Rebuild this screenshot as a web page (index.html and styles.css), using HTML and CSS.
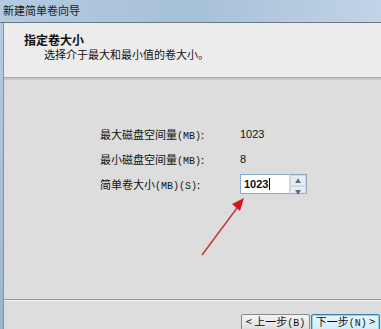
FILE: index.html
```html
<!DOCTYPE html>
<html lang="zh-CN">
<head>
<meta charset="UTF-8">
<title>新建简单卷向导</title>
<link rel="stylesheet" href="styles.css">
</head>
<body>
<div class="titlebar">新建简单卷向导</div>
<div class="frame">
  <div class="panel">
    <div class="header">
      <div class="header-title">指定卷大小</div>
      <div class="header-sub">选择介于最大和最小值的卷大小。</div>
    </div>
    <div class="sep"></div>
    <div class="content">
      <div class="row">
        <span class="label">最大磁盘空间量<span class="latin">(MB)</span>:</span>
        <span class="value">1023</span>
      </div>
      <div class="row">
        <span class="label">最小磁盘空间量<span class="latin">(MB)</span>:</span>
        <span class="value">8</span>
      </div>
      <div class="row">
        <span class="label">简单卷大小<span class="latin">(MB)(S)</span>:</span>
        <div class="spin">
          <div class="spin-text">1023<span class="caret"></span></div>
          <div class="spin-btns">
            <div class="spin-btn">&#9650;</div>
            <div class="spin-btn">&#9660;</div>
          </div>
        </div>
      </div>
      <svg class="arrow" width="60" height="70" viewBox="0 0 60 70">
        <line x1="3" y1="61" x2="38" y2="14" stroke="#c0393b" stroke-width="1.5"/>
        <polygon points="45,4 33,10 41,17" fill="#d8141c"/>
      </svg>
    </div>
    <div class="sep bottom"></div>
    <div class="footer">
      <button class="btn">&lt; 上一步<span class="latin">(B)</span></button>
      <button class="btn focus">下一步<span class="latin">(N)</span> &gt;</button>
    </div>
  </div>
</div>
</body>
</html>
```

FILE: styles.css
```css
body {
  margin: 0;
  width: 381px;
  height: 329px;
  overflow: hidden;
  background-color: #a9c0d6;
  font-family: "Noto Sans CJK SC", "Noto Sans", sans-serif;
  font-size: 11px;
  color: #111;
  display: flex;
  flex-direction: column;
}

.titlebar {
  height: 22px;
  line-height: 21px;
  padding-left: 3px;
  font-size: 11px;
  color: #1a1a1a;
  background: linear-gradient(to right, #b4cbe0, #a6c0d8 50%, #c0d4e6);
  border-bottom: 1px solid #6e7780;
}

.frame {
  flex: 1;
  display: flex;
  padding-left: 3px;
  background: linear-gradient(to bottom, #b6cbe0, #9db5cc);
}

.panel {
  flex: 1;
  display: flex;
  flex-direction: column;
  border-left: 1px solid #8e8e8e;
  background-color: #dddddd;
}

.header {
  height: 54px;
  box-sizing: border-box;
  padding: 9px 0 0 20px;
  background-color: #ececec;
}

.header-title {
  font-weight: bold;
  font-size: 12px;
  line-height: 15px;
}

.header-sub {
  padding-left: 20px;
  line-height: 15px;
}

.sep {
  height: 1px;
  background-color: #a8a8a8;
  border-bottom: 2px solid #c9c9c9;
}

.content {
  position: relative;
  flex: 1;
  padding: 41px 0 0 96px;
}

.row {
  display: flex;
  align-items: center;
  height: 25px;
}

.label {
  width: 140px;
}

.latin {
  font-family: "Liberation Mono", monospace;
  font-size: 10px;
}

.value {
  font-family: "Liberation Sans", sans-serif;
  font-size: 11px;
}

.spin {
  display: flex;
  width: 67px;
  height: 20px;
  box-sizing: border-box;
  border: 1px solid #8fa9c8;
  background-color: #fff;
}

.spin-text {
  flex: 1;
  padding-left: 3px;
  line-height: 18px;
  font-family: "Liberation Sans", sans-serif;
  font-size: 11px;
  font-weight: bold;
}

.caret {
  display: inline-block;
  width: 1px;
  height: 12px;
  margin-left: 1px;
  vertical-align: -2px;
  background-color: #000;
}

.spin-btns {
  width: 16px;
  display: flex;
  flex-direction: column;
  border-left: 1px solid #c8d4e2;
  background-color: #e8ecf0;
}

.spin-btn {
  flex: 1;
  font-size: 6px;
  line-height: 9px;
  text-align: center;
  color: #5a6a80;
  border: 1px solid #d0d8e2;
}

.arrow {
  position: absolute;
  left: 195px;
  top: 114px;
}

.bottom {
  background-color: #9a9a9a;
  border-bottom: 1px solid #f0f0f0;
}

.footer {
  height: 28px;
  display: flex;
  justify-content: flex-end;
  align-items: flex-start;
  padding: 13px 1px 0 0;
  box-sizing: border-box;
  gap: 1px;
  overflow: hidden;
}

.btn {
  flex: none;
  width: 69px;
  height: 22px;
  margin: 0;
  padding: 0 0 6px 0;
  font-family: "Noto Sans CJK SC", sans-serif;
  font-size: 11px;
  line-height: 12px;
  color: #111;
  border: 1px solid #8a8a8a;
  border-radius: 2px;
  background: linear-gradient(to bottom, #f4f4f4, #e4e4e4 50%, #d2d2d2);
}

.focus {
  border-color: #3c7fb1;
  box-shadow: inset 0 0 0 1px #8fd0ee;
  background: linear-gradient(to bottom, #eaf6fd, #d9f0fc 50%, #bee6fd);
}
```
